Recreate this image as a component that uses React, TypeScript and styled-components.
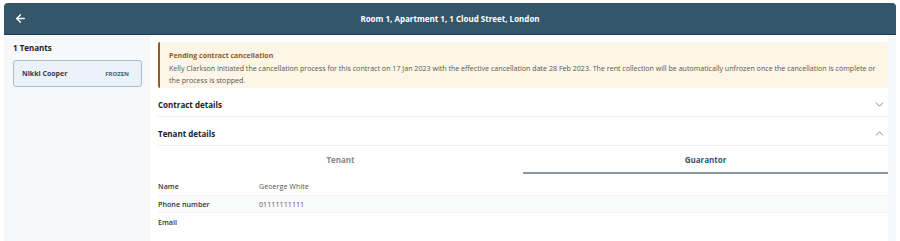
import React from 'react';
import styled, { createGlobalStyle } from 'styled-components';
import { ArrowLeft, ChevronDown, ChevronUp } from 'lucide-react';

const GlobalStyle = createGlobalStyle`
  html, body {
    margin: 0;
    padding: 0;
    background: #ffffff;
    font-family: 'Open Sans', 'Noto Sans', sans-serif;
  }
  * { box-sizing: border-box; }
`;

type Field = { label: string; value: string };

const guarantor: Field[] = [
  { label: 'Name', value: 'Geoerge White' },
  { label: 'Phone number', value: '01111111111' },
  { label: 'Email', value: '' },
];

const App: React.FC = () => {
  return (
    <>
      <GlobalStyle />
      <Frame>
        <Header>
          <BackButton>
            <ArrowLeft size={13} strokeWidth={2.5} />
          </BackButton>
          <Title>Room 1, Apartment 1, 1 Cloud Street, London</Title>
        </Header>
        <Body>
          <Sidebar>
            <SideTitle>1 Tenants</SideTitle>
            <TenantCard>
              <span className="name">Nikki Cooper</span>
              <span className="status">FROZEN</span>
            </TenantCard>
          </Sidebar>
          <Main>
            <Alert>
              <AlertTitle>Pending contract cancellation</AlertTitle>
              <AlertText>
                Kelly Clarkson initiated the cancellation process for this contract on 17 Jan 2023 with the
                effective cancellation date 28 Feb 2023. The rent collection will be automatically unfrozen once
                the cancellation is complete or the process is stopped.
              </AlertText>
            </Alert>
            <Section>
              <span>Contract details</span>
              <ChevronDown size={13} strokeWidth={1.4} />
            </Section>
            <Section>
              <span>Tenant details</span>
              <ChevronUp size={13} strokeWidth={1.4} />
            </Section>
            <Tabs>
              <Tab>Tenant</Tab>
              <Tab $active>Guarantor</Tab>
            </Tabs>
            <Fields>
              {guarantor.map((f, i) => (
                <FieldRow key={f.label} $striped={i % 2 === 1}>
                  <FieldLabel>{f.label}</FieldLabel>
                  <FieldValue>{f.value}</FieldValue>
                </FieldRow>
              ))}
            </Fields>
          </Main>
          <ScrollTrack />
        </Body>
      </Frame>
    </>
  );
};

const Frame = styled.div`
  width: 900px;
  height: 241px;
  padding: 3px 4px 0 4px;
  overflow: hidden;
  display: flex;
  flex-direction: column;
`;

const Header = styled.div`
  position: relative;
  height: 32px;
  flex-shrink: 0;
  background: #33566b;
  border-radius: 4px 4px 0 0;
  border-bottom: 1px solid #1e3d50;
  display: flex;
  align-items: center;
  justify-content: center;
`;

const BackButton = styled.div`
  position: absolute;
  left: 10px;
  top: 9px;
  color: #ffffff;
  display: flex;
`;

const Title = styled.div`
  color: #ffffff;
  font-size: 8px;
  font-weight: 700;
`;

const Body = styled.div`
  flex: 1;
  display: flex;
  min-height: 0;
`;

const Sidebar = styled.div`
  width: 146px;
  flex-shrink: 0;
  background: #f7f8fa;
  padding: 7px 8px 0 9px;
`;

const SideTitle = styled.div`
  font-size: 8px;
  font-weight: 700;
  color: #222;
  line-height: 12px;
  margin-bottom: 6px;
`;

const TenantCard = styled.div`
  height: 27px;
  border: 1px solid #a9bccd;
  border-radius: 3px;
  background: #eaf1f8;
  display: flex;
  align-items: center;
  justify-content: space-between;
  padding: 0 12px 0 8px;

  .name {
    font-size: 7px;
    font-weight: 700;
    color: #2f3e4a;
  }
  .status {
    font-size: 6px;
    font-weight: 700;
    color: #3e5e78;
  }
`;

const Main = styled.div`
  flex: 1;
  background: #ffffff;
  padding: 7px 0 0 8px;
  display: flex;
  flex-direction: column;
`;

const ScrollTrack = styled.div`
  width: 8px;
  flex-shrink: 0;
  background: #f7f8fa;
`;

const Alert = styled.div`
  height: 46px;
  flex-shrink: 0;
  background: #fdf5e5;
  border-left: 2px solid #9b5c1f;
  border-radius: 2px;
  padding: 8px 9px 0 9px;
`;

const AlertTitle = styled.div`
  font-size: 7px;
  font-weight: 700;
  color: #98581c;
  line-height: 12px;
`;

const AlertText = styled.div`
  font-size: 7.1px;
  color: #555;
  line-height: 12px;
`;

const Section = styled.div`
  height: 29px;
  flex-shrink: 0;
  padding-top: 4px;
  display: flex;
  align-items: center;
  justify-content: space-between;
  border-bottom: 1px solid #eeeeee;
  font-size: 8px;
  font-weight: 700;
  color: #222;
  svg {
    color: #666;
    margin-right: 2px;
  }
`;

const Tabs = styled.div`
  display: grid;
  grid-template-columns: 1fr 1fr;
  height: 28px;
  flex-shrink: 0;
  margin-bottom: 3px;
`;

const Tab = styled.div<{ $active?: boolean }>`
  display: flex;
  align-items: center;
  justify-content: center;
  padding-top: 1px;
  font-size: 8px;
  font-weight: 700;
  color: ${(p) => (p.$active ? '#33566b' : '#8a8a8a')};
  border-bottom: 2px solid ${(p) => (p.$active ? '#8996a2' : 'transparent')};
`;

const Fields = styled.div`
  display: flex;
  flex-direction: column;
`;

const FieldRow = styled.div<{ $striped: boolean }>`
  display: flex;
  align-items: center;
  height: 18px;
  flex-shrink: 0;
  background: ${(p) => (p.$striped ? '#fafbfb' : 'transparent')};
  border-top: ${(p) => (p.$striped ? '1px solid #f2f3f3' : 'none')};
  border-bottom: ${(p) => (p.$striped ? '1px solid #f2f3f3' : 'none')};
`;

const FieldLabel = styled.div`
  width: 101px;
  font-size: 7.2px;
  font-weight: 600;
  color: #333;
`;

const FieldValue = styled.div`
  font-size: 7.2px;
  color: #555;
`;

export default App;
